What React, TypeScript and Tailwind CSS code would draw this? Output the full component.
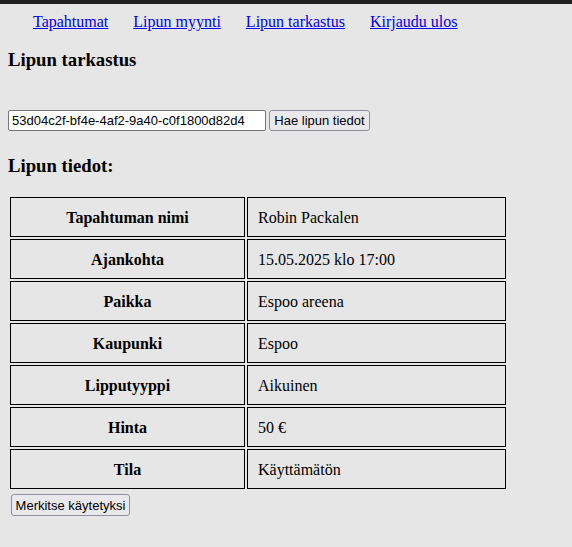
const rows: [string, string][] = [
  ['Tapahtuman nimi', 'Robin Packalen'],
  ['Ajankohta', '15.05.2025 klo 17:00'],
  ['Paikka', 'Espoo areena'],
  ['Kaupunki', 'Espoo'],
  ['Lipputyyppi', 'Aikuinen'],
  ['Hinta', '50 €'],
  ['Tila', 'Käyttämätön'],
]

const links = ['Tapahtumat', 'Lipun myynti', 'Lipun tarkastus', 'Kirjaudu ulos']

export default function App() {
  return (
    <div className="min-h-[547px] bg-[#e6e6e6] font-['Liberation_Serif',serif] text-[16px] text-black">
      <div className="h-1 bg-[#202020]" />

      <nav className="flex gap-[25px] pt-[9px] pl-[33px] leading-[18px]">
        {links.map((link) => (
          <a key={link} href="#" className="text-[#0000ee] underline">
            {link}
          </a>
        ))}
      </nav>

      <div className="px-2">
        <h3 className="mt-[18px] text-[18.72px] leading-[22px] font-bold">Lipun tarkastus</h3>

        <div className="mt-[39px] flex items-start gap-[3px] font-['Liberation_Sans',sans-serif] text-[13px]">
          <input
            type="text"
            defaultValue="53d04c2f-bf4e-4af2-9a40-c0f1800d82d4"
            className="h-[21px] w-[258px] rounded-[2px] border border-[#767676] bg-white px-[3px] leading-[15px]"
          />
          <button className="h-[21px] w-[101px] rounded-[3px] border border-[#8f8f9d] bg-[#e9e9ed] leading-[15px]">
            Hae lipun tiedot
          </button>
        </div>

        <h3 className="mt-[24px] text-[18.72px] leading-[22px] font-bold">Lipun tiedot:</h3>

        <table className="mt-[18px] w-[500px] border-separate border-spacing-[2px]">
          <tbody>
            {rows.map(([label, value]) => (
              <tr key={label}>
                <th className="h-[40px] w-[235px] border border-black pt-[2px] text-center font-bold">{label}</th>
                <td className="h-[40px] border border-black px-[10px] pt-[2px]">{value}</td>
              </tr>
            ))}
          </tbody>
        </table>

        <button className="mt-[3px] ml-[3px] h-[22px] w-[119px] rounded-[3px] border border-[#8f8f9d] bg-[#e9e9ed] font-['Liberation_Sans',sans-serif] text-[13px] leading-[15px]">
          Merkitse käytetyksi
        </button>
      </div>
    </div>
  )
}
